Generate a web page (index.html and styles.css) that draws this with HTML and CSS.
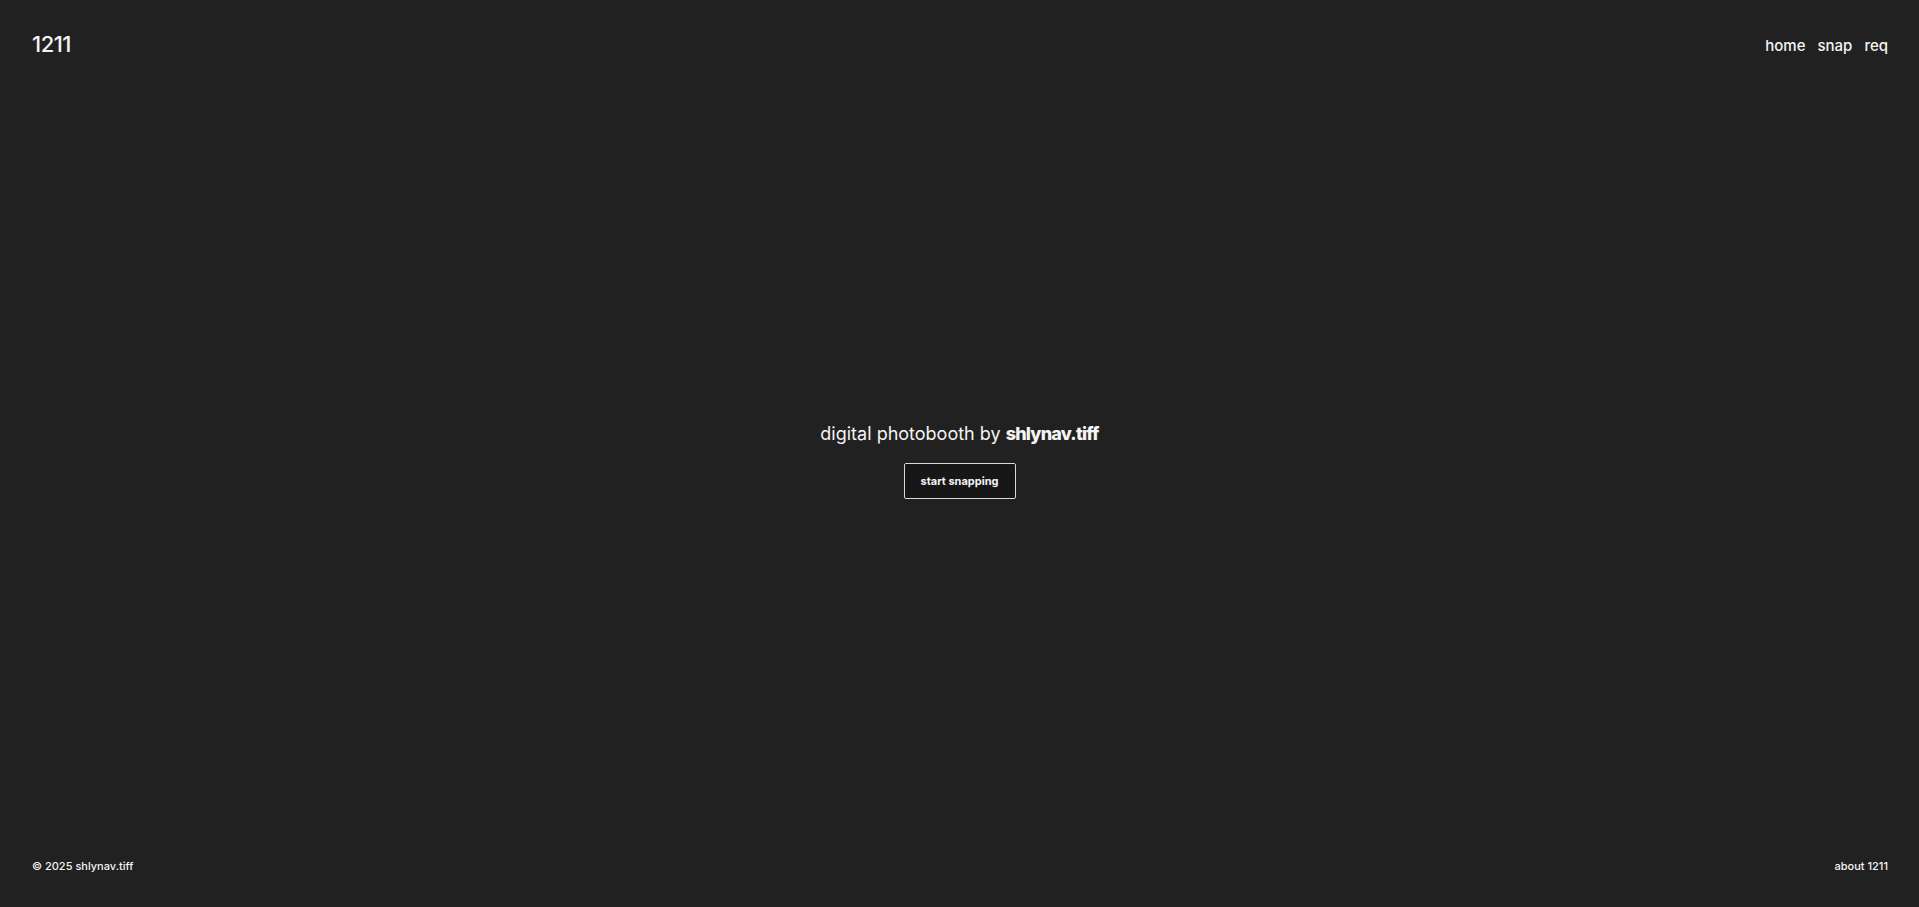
FILE: index.html
```html
<!DOCTYPE html>
<html lang="en">
<head>
<meta charset="utf-8">
<title>1211</title>
<link rel="stylesheet" href="styles.css">
</head>
<body>
<div class="page">
  <header class="header">
    <a class="logo" href="#">1211</a>
    <nav class="nav">
      <a href="#">home</a>
      <a href="#">snap</a>
      <a href="#">req</a>
    </nav>
  </header>
  <main class="main">
    <h1 class="title">digital photobooth by <strong>shlynav.tiff</strong></h1>
    <button class="btn">start snapping</button>
  </main>
  <footer class="footer">
    <span>© 2025 shlynav.tiff</span>
    <a href="#">about 1211</a>
  </footer>
</div>
</body>
</html>
```
FILE: styles.css
```css
* { box-sizing: border-box; }
html, body { margin: 0; padding: 0; }
body {
  background: #212121;
  color: #f4f4f4;
  font-family: "Inter", "Noto Sans", sans-serif;
}
a { color: inherit; text-decoration: none; }
.page {
  min-height: 100vh;
  display: flex;
  flex-direction: column;
}
.header {
  display: flex;
  justify-content: space-between;
  align-items: flex-start;
  padding: 30px 31px 0 32px;
  height: 90px;
}
.logo {
  font-size: 22px;
  font-weight: 500;
  line-height: 28px;
  letter-spacing: -0.5px;
}
.nav {
  display: flex;
  gap: 12px;
  font-size: 15px;
  font-weight: 500;
  line-height: 28px;
  margin-top: 2px;
}
.main {
  flex: 1;
  display: flex;
  flex-direction: column;
  align-items: center;
  justify-content: center;
  gap: 17px;
  padding-bottom: 27px;
}
.title {
  margin: 0;
  font-size: 18px;
  font-weight: 400;
  line-height: 24px;
}
.title strong { font-weight: 800; letter-spacing: -0.8px; }
.btn {
  font-family: inherit;
  background: #171717;
  color: #f4f4f4;
  border: 1px solid #d8d8d8;
  border-radius: 2px;
  width: 112px;
  height: 36px;
  font-size: 11px;
  font-weight: 700;
  cursor: pointer;
}
.footer {
  display: flex;
  justify-content: space-between;
  align-items: center;
  padding: 0 31px 33px 32px;
  font-size: 11px;
  font-weight: 500;
  line-height: 16px;
}
```
